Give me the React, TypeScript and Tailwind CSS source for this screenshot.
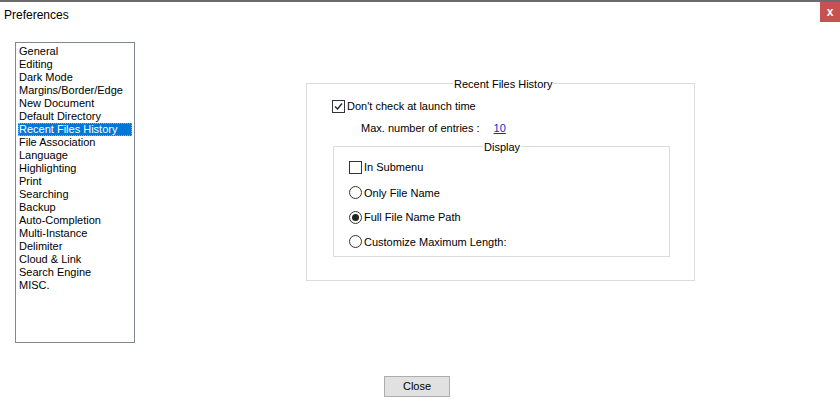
const items = ["General","Editing","Dark Mode","Margins/Border/Edge","New Document","Default Directory","Recent Files History","File Association","Language","Highlighting","Print","Searching","Backup","Auto-Completion","Multi-Instance","Delimiter","Cloud & Link","Search Engine","MISC."];

const Radio = ({ on }: { on?: boolean }) => (
  <span className="w-[13px] h-[13px] rounded-full border border-[#333] bg-white flex items-center justify-center mr-[2px]">
    {on && <span className="w-[7px] h-[7px] rounded-full bg-[#222]" />}
  </span>
);

export default function App() {
  return (
    <div className="w-[840px] h-[408px] bg-white border-t-2 border-[#6b6b6b] relative text-[11px] text-black" style={{ fontFamily: '"Liberation Sans", Arial, sans-serif' }}>
      <div className="flex justify-between h-[22px]">
        <span className="pl-[4px] pt-[4px] text-[12px]">Preferences</span>
        <span className="w-[20px] h-[20px] bg-[#c75050] text-white flex items-center justify-center text-[12px] font-bold">x</span>
      </div>
      <div className="flex mt-[18px]">
        <div className="ml-[15px] w-[120px] h-[301px] border border-[#828790] pt-[2px] pl-[2px] leading-[13px]">
          {items.map(i => (
            <div key={i} className={i === "Recent Files History" ? "bg-[#0078d7] text-white outline-1 outline-dotted outline-[#f7a000] -outline-offset-1 w-[114px] pl-[1px]" : "pl-[1px]"}>{i}</div>
          ))}
        </div>
        <div className="ml-[171px] mt-[41px] w-[389px] h-[198px] border border-[#dcdcdc] relative">
          <span className="absolute -top-[8px] left-[146px] bg-white px-[1px]">Recent Files History</span>
          <div className="flex items-center mt-[14px] ml-[25px]">
            <span className="w-[13px] h-[13px] border border-[#333] flex items-center justify-center mr-[2px]">
              <svg width="11" height="11" viewBox="0 0 11 11"><path d="M2 5.5 L4.5 8 L9 2.5" stroke="#222" strokeWidth="1.3" fill="none" /></svg>
            </span>
            Don't check at launch time
          </div>
          <div className="flex mt-[5px] ml-[54px]">
            <span>Max. number of entries :</span>
            <span className="ml-[14px] text-[#0033cc] underline">10</span>
          </div>
          <div className="ml-[26px] mt-[10px] w-[337px] h-[111px] border border-[#dcdcdc] relative">
            <span className="absolute -top-[8px] left-[149px] bg-white px-[1px]">Display</span>
            <div className="flex items-center mt-[12px] ml-[15px]">
              <span className="w-[13px] h-[13px] border border-[#333] mr-[2px]" />In Submenu
            </div>
            <div className="flex items-center mt-[9px] ml-[15px]"><Radio />Only File Name</div>
            <div className="flex items-center mt-[8px] ml-[15px]"><Radio on />Full File Name Path</div>
            <div className="flex items-center mt-[8px] ml-[15px]"><Radio />Customize Maximum Length:</div>
          </div>
        </div>
      </div>
      <div className="flex justify-center mt-[33px]">
        <button className="w-[66px] h-[21px] bg-[#e1e1e1] border border-[#adadad] text-[11px] translate-x-[-3px]">Close</button>
      </div>
    </div>
  );
}
